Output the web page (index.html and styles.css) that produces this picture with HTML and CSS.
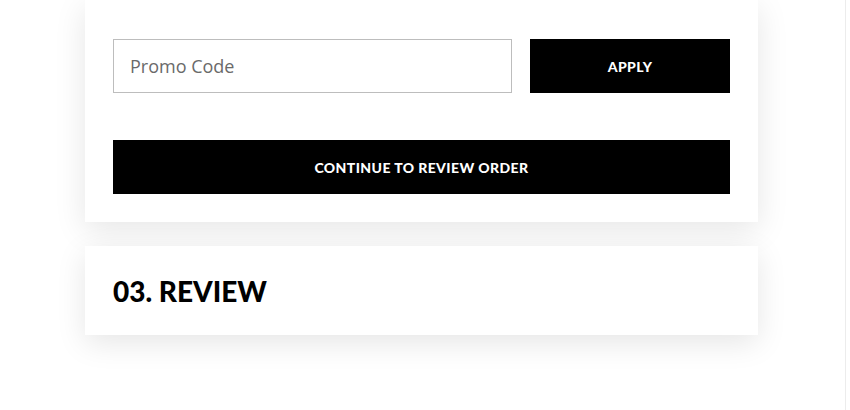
FILE: index.html
```html
<!DOCTYPE html>
<html lang="en">
  <head>
    <meta charset="UTF-8" />
    <meta name="viewport" content="width=device-width, initial-scale=1.0" />
    <title>Checkout</title>
    <link rel="stylesheet" href="styles.css">
  </head>
  <body>
    <div class="page">
      <main class="checkout">
        <section class="card payment">
          <form class="promo">
            <input class="promo-input" type="text" placeholder="Promo Code" />
            <button class="btn apply" type="button">Apply</button>
          </form>
          <button class="btn continue" type="button">Continue to review order</button>
        </section>
        <section class="card review">
          <h2>03. Review</h2>
        </section>
      </main>
      <aside class="sidebar"></aside>
    </div>
  </body>
</html>
```

FILE: styles.css
```css
body {
  margin: 0;
  background-color: #fff;
  font-family: "Open Sans", "Liberation Sans", sans-serif;
}

.page {
  display: flex;
  height: 410px;
  overflow: hidden;
}

.checkout {
  width: 845px;
  flex-shrink: 0;
  padding-left: 85px;
  box-sizing: border-box;
}

.sidebar {
  flex: 1;
  border-left: 1px solid #ececec;
}

.card {
  width: 673px;
  background-color: #fff;
  box-shadow: 0 8px 30px rgba(0, 0, 0, 0.1);
  box-sizing: border-box;
  padding: 0 28px;
}

.payment {
  padding-top: 39px;
  padding-bottom: 28px;
}

.promo {
  display: flex;
  gap: 18px;
  margin-bottom: 47px;
}

.promo-input {
  width: 399px;
  height: 54px;
  box-sizing: border-box;
  border: 1px solid #bdbdbd;
  padding: 0 16px;
  font-family: "Open Sans", sans-serif;
  font-size: 18px;
  color: #333;
}

.promo-input::placeholder {
  color: #6a6a6a;
}

.btn {
  height: 54px;
  border: 0;
  background-color: #000;
  color: #fff;
  font-family: "Lato", "DejaVu Sans", sans-serif;
  font-weight: 900;
  font-size: 14px;
  letter-spacing: 0.4px;
  text-transform: uppercase;
  cursor: pointer;
}

.apply {
  width: 200px;
}

.continue {
  display: block;
  width: 617px;
}

.review {
  margin-top: 24px;
  height: 89px;
  display: flex;
  align-items: center;
}

.review h2 {
  margin: 0;
  font-family: "Lato", "DejaVu Sans", sans-serif;
  font-weight: 900;
  font-size: 28px;
  text-transform: uppercase;
  color: #000;
}
```
